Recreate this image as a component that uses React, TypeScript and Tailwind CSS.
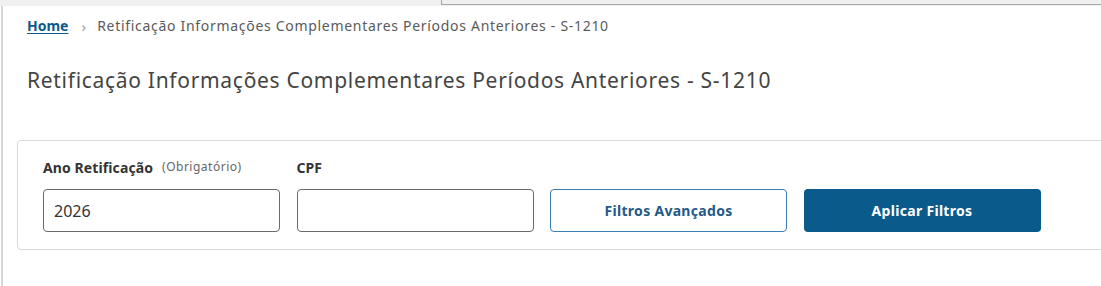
import React from "react";

export default function App() {
  return (
    <div className="w-[1101px] h-[286px] bg-white overflow-hidden relative" style={{ fontFamily: '"Noto Sans", "Open Sans", sans-serif' }}>
      <div className="h-[6px] bg-[#f0f0f0] flex">
        <div className="w-[441px]" />
        <div className="flex-1 h-[5px] border-l border-b border-[#a8a8a8] bg-[#f0f0f0]" />
      </div>
      <div className="h-[280px] border-l-2 border-[#d6d6d6] ml-px pl-[24px]">
        <nav className="flex items-center h-[28px] pt-[12px] leading-none">
          <a className="font-bold text-[#0c5a8a] underline underline-offset-2 text-[14px]">Home</a>
          <span className="ml-[13px] mr-[11px] text-[#a0a0a0] text-[15px]">›</span>
          <span className="text-[#5a5a5a] text-[14px] tracking-[0.7px]">Retificação Informações Complementares Períodos Anteriores - S-1210</span>
        </nav>
        <h1 className="mt-[36px] text-[21px] leading-none text-[#444] tracking-[0.7px]">Retificação Informações Complementares Períodos Anteriores - S-1210</h1>
        <div className="mt-[49px] -ml-[10px] w-[1120px] h-[110px] border border-[#d9d9d9] rounded-[4px] pl-[25px] pt-[16px]">
          <div className="flex gap-[16.5px]">
            <div className="w-[237px]">
              <div className="h-[20px] flex items-center gap-[9px] text-[#333]">
                <span className="font-bold text-[14px] tracking-[0.1px]">Ano Retificação</span>
                <span className="text-[12px] text-[#666] tracking-[0.5px]">(Obrigatório)</span>
              </div>
              <div className="mt-[12px] h-[43px] border border-[#6a6a6a] rounded-[4px] flex items-center px-[10px] text-[16px] text-[#333]">2026</div>
            </div>
            <div className="w-[237px]">
              <div className="h-[20px] flex items-center text-[#333]">
                <span className="font-bold text-[14px]">CPF</span>
              </div>
              <div className="mt-[12px] h-[43px] border border-[#6a6a6a] rounded-[4px]" />
            </div>
            <div className="w-[237px] pt-[32px]">
              <button className="w-full h-[43px] border border-[#3a7eb2] rounded-[4px] text-[#1f5a88] font-bold text-[14px] tracking-[0.3px]">Filtros Avançados</button>
            </div>
            <div className="w-[237px] pt-[32px]">
              <button className="w-full h-[43px] bg-[#0a5a8c] rounded-[4px] text-white font-bold text-[14px] tracking-[0.3px]">Aplicar Filtros</button>
            </div>
          </div>
        </div>
      </div>
    </div>
  );
}
